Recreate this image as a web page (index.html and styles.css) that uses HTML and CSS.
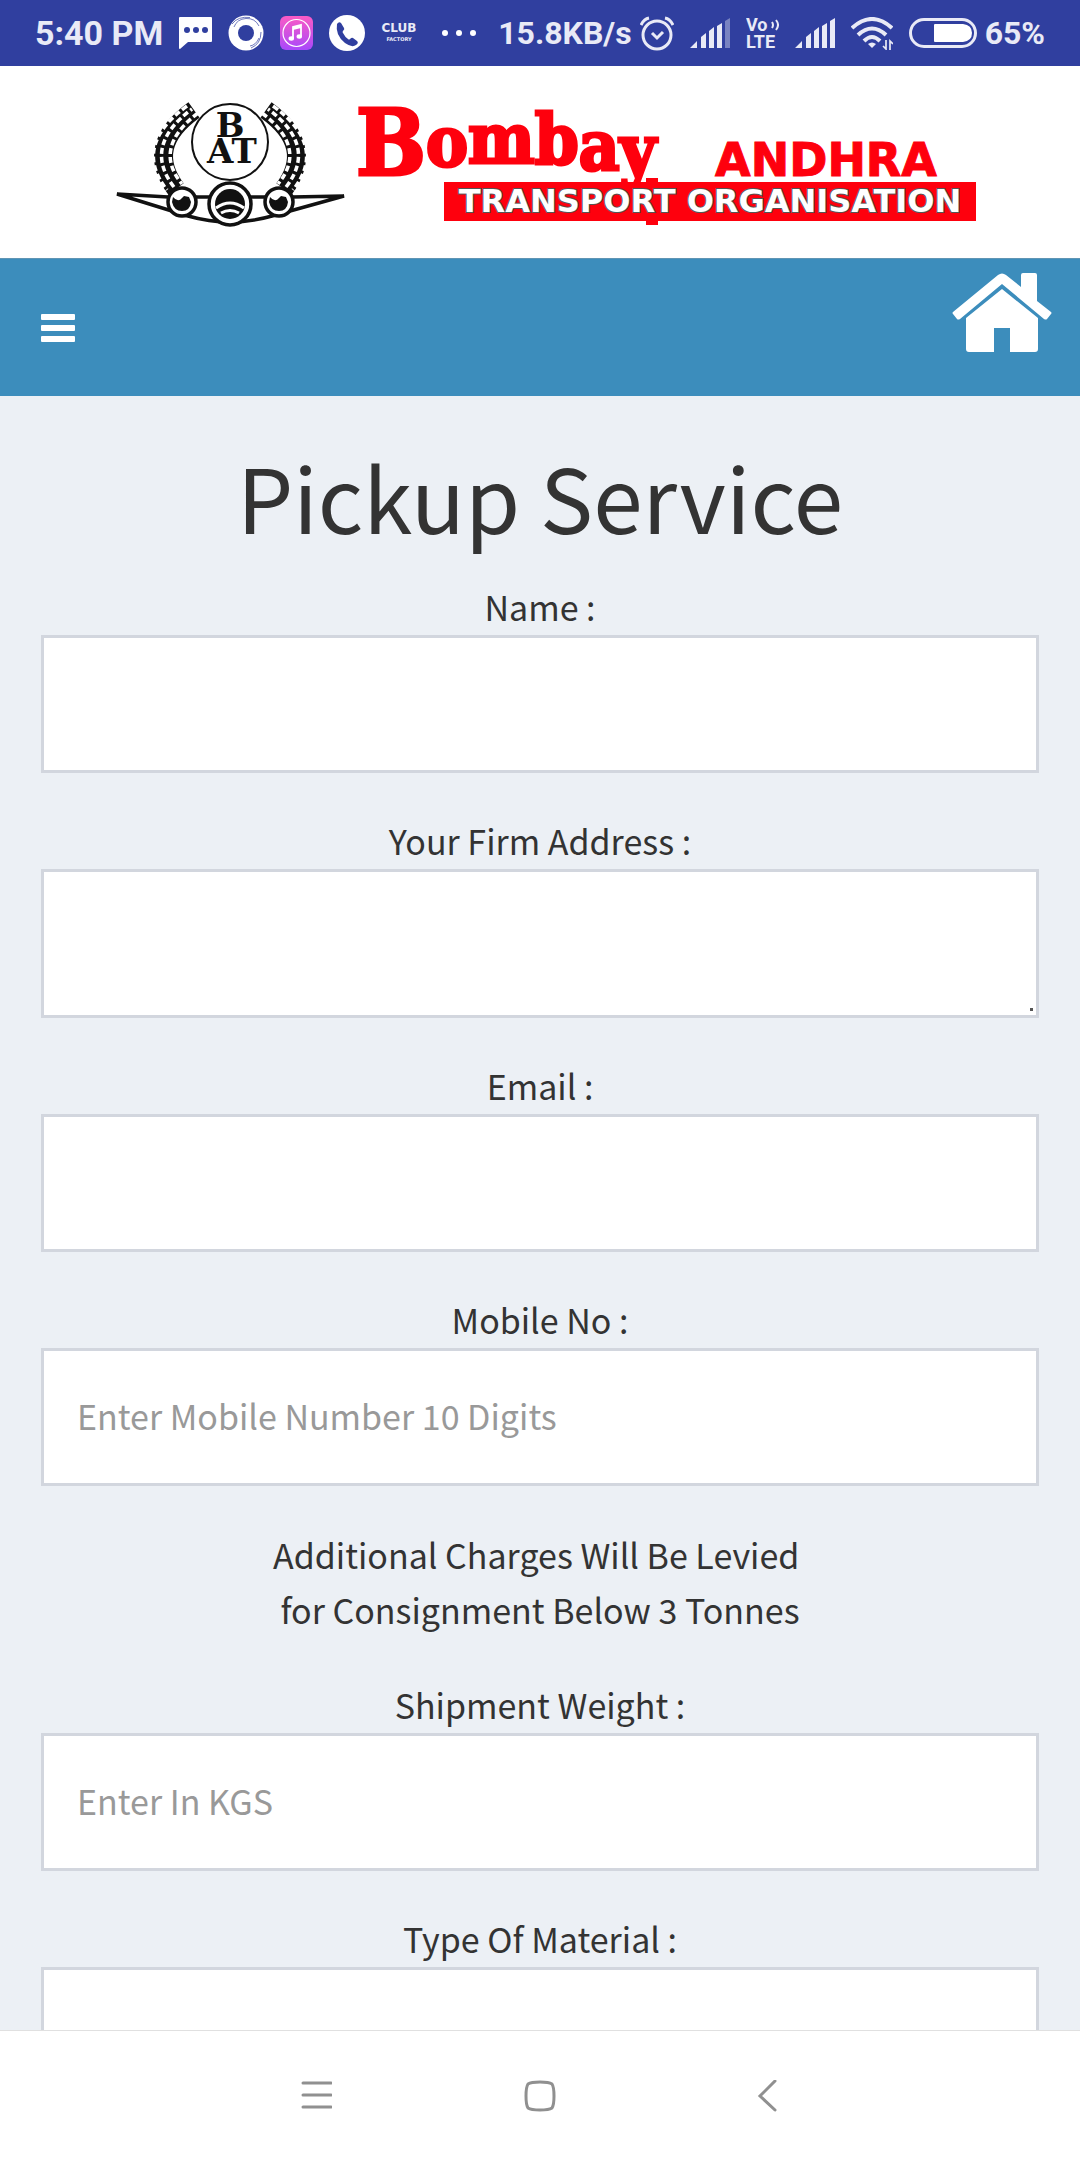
FILE: index.html
```
<!DOCTYPE html>
<html lang="en">
<head>
    <meta charset="UTF-8">
    <meta name="viewport" content="width=device-width, initial-scale=1.0">
    <title>Pickup Service</title>
    <link rel="stylesheet" href="styles.css">
</head>
<body>

<!-- Status bar -->
<div class="status-bar">
    <div class="status-group">
        <span class="status-time">5:40 PM</span>
        <svg width="33" height="32" viewBox="0 0 33 32"><path fill="#fff" d="M1 0h31q1 0 1 1v23q0 1-1 1H9l-8 7q-1 0-1-1V1q0-1 1-1z"/><g fill="#303f9f"><circle cx="8" cy="13" r="3"/><circle cx="17" cy="13" r="3"/><circle cx="26" cy="13" r="3"/></g></svg>
        <svg width="36" height="36" viewBox="0 0 36 36"><circle cx="18" cy="18" r="17.500" fill="#fff"/><circle cx="18" cy="18" r="8" fill="#303f9f"/><g fill="none" stroke="#303f9f" stroke-width=".7"><path d="M6 12Q9 4 18 3.500Q27 3 31 11M4 9Q10 1 22 2.500"/><path d="M33 17Q33 29 23 33M31 23Q28 30 22 31"/></g></svg>
        <svg width="33" height="34" viewBox="0 0 33 34">
            <defs><linearGradient id="music" x2="0" y2="1"><stop stop-color="#fb5bc5"/><stop offset="1" stop-color="#a848fb"/></linearGradient></defs>
            <rect width="33" height="34" rx="6" fill="url(#music)"/>
            <circle cx="16.500" cy="17" r="13.500" fill="none" stroke="#fff" stroke-width="1.200"/>
            <path d="M13 22V11l8-2v11" fill="none" stroke="#fff" stroke-width="1.800"/><path d="M13 11l8-2v3l-8 2z" fill="#fff"/><ellipse cx="11.300" cy="22.500" rx="2.700" ry="2.200" fill="#fff"/><ellipse cx="19.300" cy="20.500" rx="2.700" ry="2.200" fill="#fff"/>
        </svg>
        <svg width="36" height="36" viewBox="0 0 36 36"><circle cx="18" cy="18" r="18" fill="#fff"/><path fill="#303f9f" d="M8 9q2-3 4-1l3 5q1 1-1 3-1 1 0 2 2 4 5 6 1 1 2 0 2-2 3-1l4 3q2 2-1 4-4 3-11-2Q6 20 8 9z"/></svg>
        <svg width="37" height="32" viewBox="0 0 37 32"><text class="club" x="18" y="15">CLUB</text><text class="club-small" x="18" y="24">FACTORY</text></svg>
        <svg width="51" height="6" viewBox="0 0 51 6" fill="#fff"><circle cx="11" cy="3" r="3"/><circle cx="25" cy="3" r="3"/><circle cx="39" cy="3" r="3"/></svg>
    </div>
    <div class="status-group">
        <span class="status-alarm">15.8KB/s
            <svg width="34" height="35" viewBox="0 0 34 35" fill="none" stroke="#e9eaf6" stroke-width="3"><circle cx="17" cy="19" r="14"/><path d="M1 9q3-6 8-7M33 9q-3-6-8-7M12 17l5 5 6-6"/></svg>
        </span>
        <svg width="40" height="30" viewBox="0 0 40 30" fill="#e9eaf6"><path d="M0 30l7-7v7zM11 19l5-4v15h-5zM19 13l5-4v21h-5zM27 8l5-3v25h-5z"/><path opacity=".4" d="M35 3l5-3v30h-5z"/></svg>
        <svg width="33" height="40" viewBox="0 0 33 40"><text class="volte" x="0" y="18">Vo</text><text class="volte" x="0" y="35">LTE</text><path d="M26 9q2 3 0 6M30 7q4 5 0 10" fill="none" stroke="#e9eaf6" stroke-width="2"/></svg>
        <svg width="40" height="30" viewBox="0 0 40 30" fill="#e9eaf6"><path d="M0 30l7-7v7zM11 19l5-4v15h-5zM19 13l5-4v21h-5zM27 8l5-3v25h-5zM35 3l5-3v30h-5z"/></svg>
        <svg width="42" height="33" viewBox="0 0 42 33" fill="none" stroke="#e9eaf6" stroke-width="4"><path d="M1 11Q21-7 41 11M7 18q14-13 28 0M13 24q8-8 16 0"/><path d="M17 27q4-3 8 0l-4 4z" fill="#e9eaf6" stroke="none"/><path d="M35 23v9l-3-3M39 33v-9l3 3" stroke-width="1.700"/></svg>
        <span class="status-battery">
            <svg width="68" height="30" viewBox="0 0 68 30"><rect x="1.500" y="1.500" width="65" height="27" rx="13.500" fill="none" stroke="#e9eaf6" stroke-width="3"/><path d="M26 6h28q9 1 9 9t-9 9H26q-1 0-1-1V7q0-1 1-1z" fill="#fff"/></svg>
            65%
        </span>
    </div>
</div>

<!-- Company logo -->
<header class="logo-bar">
    <svg class="logo" viewBox="0 0 892 192" role="img" aria-label="Bombay Andhra Transport Organisation">
        <defs>
            <g id="wreath" fill="none">
                <path d="M100 44Q50 80 82 123" stroke="#111" stroke-width="19"/>
                <g stroke="#fff" stroke-width="3.500">
                    <path d="M93 40Q38 80 73 124" stroke-dasharray="6 3"/>
                    <path d="M98 43Q48 80 80 121" stroke-dasharray="6 3" stroke-dashoffset="4"/>
                    <path d="M104 47Q58 82 88 118" stroke-dasharray="6 3"/>
                </g>
            </g>
        </defs>
        <use href="#wreath"/>
        <use href="#wreath" transform="translate(272) scale(-1 1)"/>
        <circle cx="136" cy="76" r="38" fill="#fff" stroke="#111" stroke-width="2"/>
        <text class="logo-bat" x="136" y="71">B</text>
        <text class="logo-bat" x="138" y="97">AT</text>
        <g fill="#fff" stroke="#111" stroke-width="3.500">
            <path d="M23 128l51 3H198l52-1-72 20q-42 12-84 0z"/>
            <circle cx="88" cy="136" r="14"/>
            <circle cx="185" cy="136" r="14"/>
            <circle cx="136" cy="138" r="21"/>
        </g>
        <g fill="#111">
            <path d="M79 131q5 6 9 1l2-2 5 1 2 5q-1 9-9 9t-10-9z"/>
            <path d="M176 131q5 6 9 1l2-2 5 1 2 5q-1 9-9 9t-10-9z"/>
            <circle cx="136" cy="138" r="15"/>
        </g>
        <path d="M122 142q14-10 28 0M127 147q9-5 18 0" fill="none" stroke="#fff" stroke-width="3"/>

        <rect x="350" y="116" width="532" height="39" fill="#fe000d"/>
        <rect x="552" y="112" width="12" height="47" fill="#fe000d"/>
        <text class="logo-bombay" x="262" y="109" dy="0 -9 -3 1 6 4"><tspan class="logo-cap">B</tspan>ombay</text>
        <text class="logo-andhra" x="732" y="110">ANDHRA</text>
        <text class="logo-band" x="616" y="146">TRANSPORT ORGANISATION</text>
    </svg>
</header>

<!-- Menu bar -->
<nav class="navbar">
    <button class="menu-button" type="button" aria-label="Menu"><span></span><span></span><span></span></button>
    <a class="home-link" href="#" aria-label="Home">
        <svg width="100" height="79" viewBox="0 0 100 79" fill="#fff"><path d="M1 39L46 2q4-3 8 0l15 12V2q0-2 2-2h12q2 0 2 2v26l14 11q1 1 0 2l-4 5q-1 1-3 0L50 11 8 46q-2 1-3 0l-4-5q-1-1 0-2z"/><path d="M50 16l36 29v31q0 3-3 3H58V55H42v24H17q-3 0-3-3V45z"/></svg>
    </a>
</nav>

<main class="content">
    <h1>Pickup Service</h1>
    <form>
        <div class="form-group">
            <label for="name">Name :</label>
            <input type="text" id="name">
        </div>
        <div class="form-group">
            <label for="address">Your Firm Address :</label>
            <textarea id="address"></textarea>
        </div>
        <div class="form-group">
            <label for="email">Email :</label>
            <input type="email" id="email">
        </div>
        <div class="form-group">
            <label for="mobile">Mobile No :</label>
            <input type="tel" id="mobile" placeholder="Enter Mobile Number 10 Digits">
        </div>
        <p class="form-group">Additional Charges Will Be Levied&nbsp;<br>for Consignment Below 3 Tonnes</p>
        <div class="form-group">
            <label for="weight">Shipment Weight :</label>
            <input type="text" id="weight" placeholder="Enter In KGS">
        </div>
        <div class="form-group">
            <label for="material">Type Of Material :</label>
            <input type="text" id="material">
        </div>
    </form>
</main>

<!-- Phone navigation -->
<footer class="phone-nav">
    <button type="button" aria-label="Recent apps"><svg width="32" height="32" viewBox="0 0 32 32"><path d="M3 3h28M3 15h28M3 27h28"/></svg></button>
    <button type="button" aria-label="Home screen"><svg width="32" height="32" viewBox="0 0 32 32"><path d="M16 2q9 0 12 2 2 3 2 12t-2 12q-3 2-12 2T4 28q-2-3-2-12T4 4q3-2 12-2z"/></svg></button>
    <button type="button" aria-label="Back"><svg width="32" height="32" viewBox="0 0 32 32"><path d="M27 1L12 16l15 14"/></svg></button>
</footer>

</body>
</html>
```
FILE: styles.css
```
* {
    box-sizing: border-box;
}
body {
    display: flex;
    flex-direction: column;
    height: 100vh;
    margin: 0;
    background-color: #ecf0f5;
    color: #333;
    font-family: "Noto Sans CJK SC", "Noto Sans", sans-serif;
    font-size: 34px;
    line-height: 55px;
}
svg {
    display: block;
    flex: none;
}
button {
    padding: 0;
    border: none;
    background: none;
    cursor: pointer;
}

/* Status bar */
.status-bar {
    display: flex;
    flex: none;
    justify-content: space-between;
    align-items: center;
    height: 66px;
    padding: 0 35px;
    background-color: #303f9f;
    color: #e9eaf6;
    font-family: Roboto, sans-serif;
    font-size: 32px;
    font-weight: 700;
}
.status-group {
    display: flex;
    align-items: center;
    gap: 16px;
}
.status-time {
    font-size: 34px;
}
.status-alarm,
.status-battery {
    display: flex;
    align-items: center;
    gap: 8px;
}
.club,
.club-small {
    fill: #e9eaf6;
    font-family: "DejaVu Sans", sans-serif;
    font-size: 12px;
    font-weight: 700;
    text-anchor: middle;
}
.club-small {
    font-size: 5px;
}
.volte {
    fill: #e9eaf6;
    font-family: Roboto, sans-serif;
    font-size: 18px;
    font-weight: 700;
}

/* Logo */
.logo-bar {
    flex: none;
    background-color: #fff;
}
.logo {
    width: 892px;
    max-width: 100%;
    margin: 0 auto;
}
.logo-bat {
    fill: #111;
    font: bold 34px "DejaVu Serif", serif;
    text-anchor: middle;
}
.logo-bombay {
    fill: #fe000d;
    stroke: #fe000d;
    stroke-width: 3px;
    font: bold 70px "DejaVu Serif Condensed", "DejaVu Serif", serif;
}
.logo-cap {
    font-size: 92px;
}
.logo-andhra {
    fill: #fe000d;
    stroke: #fe000d;
    stroke-width: 1px;
    font: bold 46px "DejaVu Sans", sans-serif;
    text-anchor: middle;
}
.logo-band {
    fill: #fff;
    stroke: #555;
    stroke-width: 2px;
    paint-order: stroke;
    font: bold 32px "DejaVu Sans", sans-serif;
    text-anchor: middle;
}

/* Menu bar */
.navbar {
    display: flex;
    flex: none;
    justify-content: space-between;
    align-items: center;
    height: 138px;
    padding: 0 28px 0 41px;
    border-top: 1px solid #6095b4;
    background-color: #3c8dbc;
}
.menu-button {
    display: flex;
    flex-direction: column;
    gap: 5px;
}
.menu-button span {
    width: 34px;
    height: 6px;
    border-radius: 1px;
    background-color: #fff;
}
.home-link {
    align-self: flex-start;
    padding-top: 14px;
}

/* Form */
.content {
    flex: 1;
    min-height: 0;
    padding: 45px 41px 0;
    overflow-y: auto;
    scrollbar-width: none;
    text-align: center;
}
h1 {
    margin: 0 0 29px;
    font-size: 89px;
    font-weight: 400;
    line-height: 110px;
}
.form-group {
    margin: 0 0 41px;
}
label {
    display: block;
    margin-bottom: 2px;
    line-height: 53px;
}
input,
textarea {
    display: block;
    width: 100%;
    height: 138px;
    padding: 14px 33px 18px;
    border: 3px solid #d2d6de;
    border-radius: 0;
    background-color: #fff;
    color: #555;
    font: inherit;
}
textarea {
    height: 149px;
    resize: none;
    background: linear-gradient(#555, #555) right 3px bottom 4px / 3px 3px no-repeat #fff;
}
::placeholder {
    color: #999;
    opacity: 1;
}

/* Phone navigation */
.phone-nav {
    display: flex;
    flex: none;
    justify-content: center;
    height: 130px;
    border-top: 1px solid #e0e0e0;
    background-color: #fff;
}
.phone-nav button {
    display: flex;
    justify-content: center;
    align-items: center;
    width: 224px;
}
.phone-nav path {
    fill: none;
    stroke: #909090;
    stroke-width: 3px;
    stroke-linecap: round;
}
```
